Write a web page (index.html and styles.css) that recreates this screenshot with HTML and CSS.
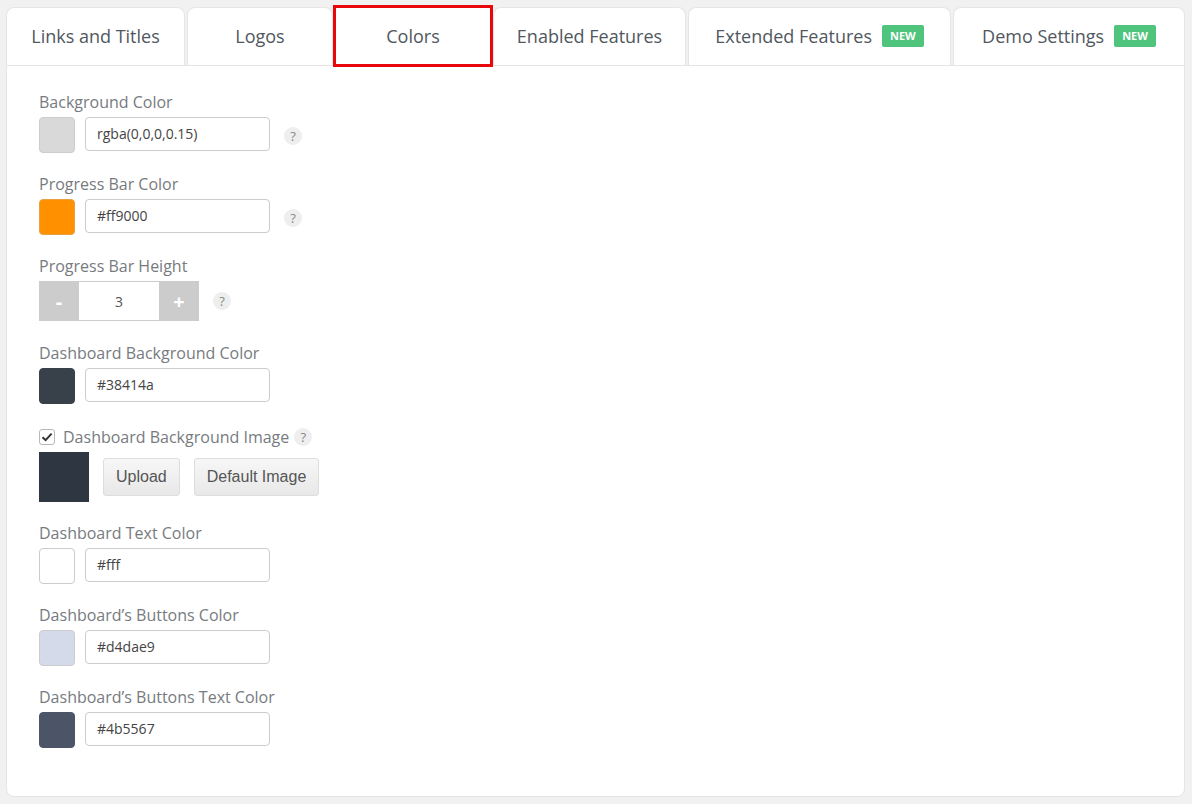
FILE: index.html
```html
<!DOCTYPE html>
<html lang="en">
<head>
    <meta charset="UTF-8" />
    <title>Colors</title>
    <link rel="stylesheet" href="styles.css">
</head>
<body>
    <div class="settings">
        <!-- Tab strip -->
        <div class="tabs">
            <div class="tab tab-links">Links and Titles</div>
            <div class="tab tab-logos">Logos</div>
            <div class="tab tab-active">Colors</div>
            <div class="tab tab-enabled">Enabled Features</div>
            <div class="tab tab-extended">Extended Features <span class="badge">NEW</span></div>
            <div class="tab tab-demo">Demo Settings <span class="badge">NEW</span></div>
        </div>

        <!-- Colors panel -->
        <div class="panel">
            <div class="field">
                <label class="field-label">Background Color</label>
                <div class="field-row">
                    <span class="swatch swatch-bg"></span>
                    <input class="text-input" type="text" value="rgba(0,0,0,0.15)">
                    <span class="help help-far">?</span>
                </div>
            </div>

            <div class="field">
                <label class="field-label">Progress Bar Color</label>
                <div class="field-row">
                    <span class="swatch swatch-orange"></span>
                    <input class="text-input" type="text" value="#ff9000">
                    <span class="help help-far">?</span>
                </div>
            </div>

            <div class="field field-stepper">
                <label class="field-label">Progress Bar Height</label>
                <div class="field-row">
                    <div class="stepper">
                        <button class="step-btn">-</button>
                        <input class="step-value" type="text" value="3">
                        <button class="step-btn">+</button>
                    </div>
                    <span class="help help-step">?</span>
                </div>
            </div>

            <div class="field">
                <label class="field-label">Dashboard Background Color</label>
                <div class="field-row">
                    <span class="swatch swatch-dark"></span>
                    <input class="text-input" type="text" value="#38414a">
                </div>
            </div>

            <div class="field field-image">
                <div class="check-label">
                    <span class="checkbox">
                        <svg width="12" height="12" viewBox="0 0 12 12"><path d="M1.5 6.3 L4.6 9.2 L10.6 2.6" fill="none" stroke="#333" stroke-width="2"/></svg>
                    </span>
                    Dashboard Background Image <span class="help">?</span>
                </div>
                <div class="image-row">
                    <span class="image-thumb"></span>
                    <button class="btn">Upload</button>
                    <button class="btn">Default Image</button>
                </div>
            </div>

            <div class="field">
                <label class="field-label">Dashboard Text Color</label>
                <div class="field-row">
                    <span class="swatch swatch-white"></span>
                    <input class="text-input" type="text" value="#fff">
                </div>
            </div>

            <div class="field">
                <label class="field-label">Dashboard’s Buttons Color</label>
                <div class="field-row">
                    <span class="swatch swatch-light"></span>
                    <input class="text-input" type="text" value="#d4dae9">
                </div>
            </div>

            <div class="field">
                <label class="field-label">Dashboard’s Buttons Text Color</label>
                <div class="field-row">
                    <span class="swatch swatch-slate"></span>
                    <input class="text-input" type="text" value="#4b5567">
                </div>
            </div>
        </div>
    </div>
</body>
</html>
```

FILE: styles.css
```css
body {
    margin: 0;
    background: #f1f1f1;
    font-family: "Open Sans", Arial, sans-serif;
    color: #777b80;
}

.settings {
    padding: 7px 7px 7px 6px;
}

.tabs {
    display: flex;
    gap: 2px;
}

.tab {
    display: flex;
    align-items: center;
    justify-content: center;
    flex: none;
    gap: 10px;
    height: 58px;
    padding-bottom: 1px;
    box-sizing: border-box;
    background: #fff;
    border: 1px solid #e5e5e5;
    border-bottom: none;
    border-radius: 8px 8px 0 0;
    font-size: 18px;
    color: #50575e;
    white-space: nowrap;
}

.tab-links { width: 179px; }
.tab-logos { width: 146px; }
.tab-enabled { width: 193px; }
.tab-extended { width: 263px; }
.tab-demo { flex: 1; }

.tab-active {
    width: 156px;
    outline: 3px solid #e8070b;
    outline-offset: -1px;
    border-radius: 0;
    position: relative;
    z-index: 1;
}

.badge {
    background: #4fc47c;
    color: #fff;
    font-size: 11px;
    font-weight: bold;
    padding: 3px 8px;
    border-radius: 2px;
    line-height: 16px;
}

.panel {
    background: #fff;
    border: 1px solid #e5e5e5;
    border-radius: 0 0 8px 8px;
    padding: 25px 32px 48px;
}

.field {
    margin-bottom: 20px;
}

.field:last-child {
    margin-bottom: 0;
}

.field-stepper {
    margin-bottom: 21px;
}

.field-image {
    margin-top: 22px;
}

.field-label {
    display: block;
    font-size: 16px;
    line-height: 22px;
    margin-bottom: 4px;
}

.field-row {
    display: flex;
    align-items: center;
}

.swatch {
    width: 36px;
    height: 36px;
    box-sizing: border-box;
    border: 1px solid #ccc;
    border-radius: 4px;
    margin-right: 10px;
}

.swatch-bg { background: #d9d9d9; }
.swatch-orange { background: #ff9000; border-color: #e8a040; }
.swatch-dark { background: #38414a; border-color: #38414a; }
.swatch-white { background: #fff; }
.swatch-light { background: #d4dae9; }
.swatch-slate { background: #4b5567; border-color: #4b5567; }

.text-input {
    width: 185px;
    height: 34px;
    box-sizing: border-box;
    margin: 0 0 2px;
    padding: 0 11px 2px;
    border: 1px solid #ccc;
    border-radius: 4px;
    font-family: "Open Sans", Arial, sans-serif;
    font-size: 14px;
    color: #444;
}

.help {
    display: inline-flex;
    align-items: center;
    justify-content: center;
    width: 18px;
    height: 18px;
    border-radius: 50%;
    background: #eee;
    color: #888;
    font-size: 13px;
}

.help-far {
    margin: 2px 0 0 14px;
}

.help-step {
    margin-left: 14px;
}

.stepper {
    display: flex;
    height: 40px;
}

.step-btn {
    width: 40px;
    border: none;
    background: #ccc;
    color: #fff;
    font-family: "Open Sans", Arial, sans-serif;
    font-size: 20px;
    font-weight: bold;
    padding: 0;
}

.step-value {
    width: 80px;
    box-sizing: border-box;
    border: 1px solid #ccc;
    border-left: none;
    border-right: none;
    text-align: center;
    font-family: "Open Sans", Arial, sans-serif;
    font-size: 14px;
    color: #555;
}

.check-label {
    display: flex;
    align-items: center;
    font-size: 16px;
    line-height: 22px;
    margin-bottom: 4px;
}

.check-label .help {
    margin-left: 5px;
}

.checkbox {
    display: inline-flex;
    align-items: center;
    justify-content: center;
    width: 16px;
    height: 16px;
    box-sizing: border-box;
    border: 1px solid #b4b9be;
    border-radius: 3px;
    margin-right: 8px;
}

.image-row {
    display: flex;
    align-items: center;
}

.image-thumb {
    width: 50px;
    height: 50px;
    background: #2e3741;
    margin-right: 14px;
}

.btn {
    height: 38px;
    padding: 0 12px;
    margin-right: 14px;
    border: 1px solid #ddd;
    border-radius: 3px;
    background: linear-gradient(#f7f7f7, #e8e8e8);
    font-family: "Liberation Sans", Arial, sans-serif;
    font-size: 16px;
    color: #555;
}
```
